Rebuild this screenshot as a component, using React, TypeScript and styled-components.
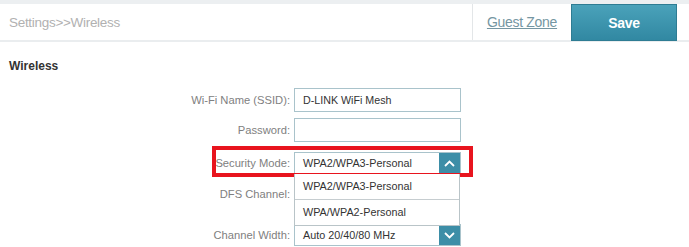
import React from 'react';
import styled, { createGlobalStyle } from 'styled-components';

const GlobalStyle = createGlobalStyle`
  html, body {
    margin: 0;
    padding: 0;
    background: #fff;
    font-family: "Liberation Sans", Arial, sans-serif;
  }
`;

const Page = styled.div`
  width: 689px;
  height: 247px;
  overflow: hidden;
  background: #fff;
`;

const Header = styled.header`
  display: flex;
  align-items: stretch;
  height: 36px;
  border-top: 4px solid #eceff1;
  border-bottom: 2px solid #eaedef;
  padding-right: 12px;
`;

const Breadcrumb = styled.div`
  flex: 1;
  display: flex;
  align-items: center;
  padding-left: 9px;
  font-size: 13.5px;
  letter-spacing: -0.3px;
  color: #b1b1b1;
`;

const GuestZone = styled.a`
  display: flex;
  align-items: center;
  justify-content: center;
  width: 98px;
  border-left: 1px solid #e3e6e8;
  font-size: 14px;
  letter-spacing: -0.3px;
  color: #7596a2;
  text-decoration: underline;
  cursor: pointer;
`;

const SaveButton = styled.button`
  width: 106px;
  margin-bottom: -1px;
  border: 1px solid #2e7c93;
  background: linear-gradient(#4aa2ba, #3188a2);
  color: #fff;
  font-family: inherit;
  font-size: 14px;
  font-weight: bold;
  letter-spacing: -0.3px;
  cursor: pointer;
`;

const Section = styled.section`
  padding: 17px 0 0 9px;
`;

const SectionTitle = styled.h2`
  margin: 0;
  font-size: 12px;
  line-height: 14px;
  font-weight: bold;
  color: #333;
`;

const Form = styled.div`
  display: flex;
  flex-direction: column;
  margin-left: -9px;
  margin-top: 15px;
`;

const Row = styled.div<{ $gap: number; $highlight?: boolean }>`
  position: relative;
  display: grid;
  grid-template-columns: 290px 167px;
  column-gap: 4px;
  align-items: center;
  width: 461px;
  margin-top: ${p => p.$gap}px;
  ${p => p.$highlight && 'z-index: 2;'}

  ${p => p.$highlight && `
    &::after {
      content: '';
      position: absolute;
      top: -6px;
      bottom: -3px;
      left: 212px;
      right: -12px;
      border: 4px solid #e8141e;
      pointer-events: none;
    }
  `}
`;

const Label = styled.label`
  text-align: right;
  font-size: 11.2px;
  color: #808080;
`;

const TextInput = styled.input`
  box-sizing: border-box;
  width: 100%;
  height: 24px;
  padding: 0 8px;
  border: 1px solid #a9c3cb;
  outline: none;
  font-family: inherit;
  font-size: 10.7px;
  color: #333;
`;

const SelectWrap = styled.div`
  position: relative;
`;

const SelectBox = styled.div`
  box-sizing: border-box;
  display: flex;
  align-items: center;
  height: 22px;
  padding-left: 8px;
  border: 1px solid #a9c3cb;
  background: #fff;
  font-size: 10.8px;
  color: #333;
`;

const SelectValue = styled.span`
  flex: 1;
`;

const ArrowBox = styled.span`
  display: flex;
  align-items: center;
  justify-content: center;
  width: 21px;
  height: 100%;
  background: #3d8ea7;
`;

const Dropdown = styled.ul`
  position: absolute;
  top: 100%;
  left: 0;
  right: 1px;
  z-index: 3;
  margin: 0;
  padding: 0;
  list-style: none;
  background: #fff;
  border: 1px solid #b9c4c8;
  border-top: none;
`;

const Option = styled.li`
  height: 25px;
  line-height: 25px;
  padding-left: 8px;
  font-size: 10.8px;
  color: #333;

  & + & {
    border-top: 1px solid #c6cdd0;
  }
`;

const Placeholder = styled.div`
  height: 22px;
`;

const Chevron: React.FC<{ up?: boolean }> = ({ up }) => (
  <svg width="11" height="7" viewBox="0 0 11 7">
    <polyline
      points={up ? '1,6 5.5,1.5 10,6' : '1,1 5.5,5.5 10,1'}
      fill="none"
      stroke="#fff"
      strokeWidth="1.8"
    />
  </svg>
);

const Select: React.FC<{ value: string; open?: boolean; options?: string[] }> = ({ value, open, options }) => (
  <SelectWrap>
    <SelectBox>
      <SelectValue>{value}</SelectValue>
      <ArrowBox>
        <Chevron up={open} />
      </ArrowBox>
    </SelectBox>
    {open && options && (
      <Dropdown>
        {options.map(o => (
          <Option key={o}>{o}</Option>
        ))}
      </Dropdown>
    )}
  </SelectWrap>
);

const App: React.FC = () => {
  return (
    <Page>
      <GlobalStyle />
      <Header>
        <Breadcrumb>Settings&gt;&gt;Wireless</Breadcrumb>
        <GuestZone>Guest Zone</GuestZone>
        <SaveButton>Save</SaveButton>
      </Header>

      <Section>
        <SectionTitle>Wireless</SectionTitle>
        <Form>
          <Row $gap={0}>
            <Label>Wi-Fi Name (SSID):</Label>
            <TextInput defaultValue="D-LINK WiFi Mesh" />
          </Row>
          <Row $gap={6}>
            <Label>Password:</Label>
            <TextInput type="password" />
          </Row>
          <Row $gap={10} $highlight>
            <Label>Security Mode:</Label>
            <Select
              value="WPA2/WPA3-Personal"
              open
              options={['WPA2/WPA3-Personal', 'WPA/WPA2-Personal']}
            />
          </Row>
          <Row $gap={9}>
            <Label>DFS Channel:</Label>
            <Placeholder />
          </Row>
          <Row $gap={19}>
            <Label>Channel Width:</Label>
            <Select value="Auto 20/40/80 MHz" />
          </Row>
        </Form>
      </Section>
    </Page>
  );
};

export default App;
